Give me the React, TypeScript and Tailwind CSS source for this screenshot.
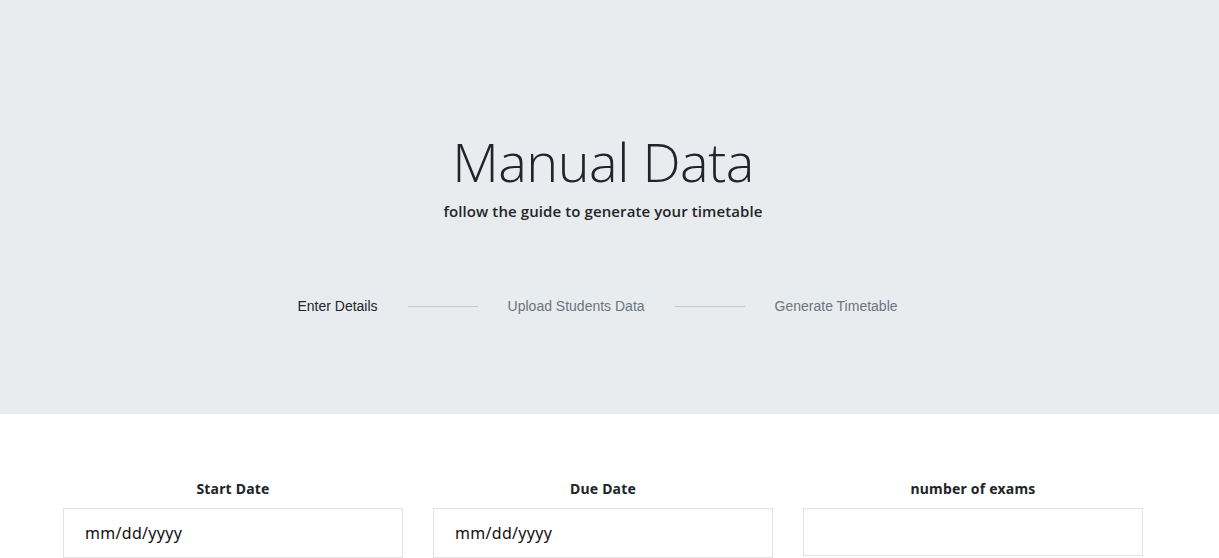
import React from "react";

export default function App() {
  const fields = [
    { label: "Start Date", ph: "mm/dd/yyyy", h: "h-[50px]" },
    { label: "Due Date", ph: "mm/dd/yyyy", h: "h-[50px]" },
    { label: "number of exams", ph: "", h: "h-[48px]" },
  ];
  return (
    <div className="w-[1219px] h-[558px] overflow-hidden bg-white">
      <div className="h-[414px] bg-[#e9ecef]">
        <div className="w-[1206px] flex flex-col items-center pt-[126px]">
          <h1
            className="text-[54px] leading-[70px] font-light text-[#212529] tracking-[-0.5px]"
            style={{ fontFamily: '"Open Sans", sans-serif', fontWeight: 300 }}
          >
            Manual Data
          </h1>
          <p
            className="text-[15px] leading-[22px] font-semibold text-[#212529] mt-[4px] tracking-[0.1px]"
            style={{ fontFamily: '"Open Sans", sans-serif' }}
          >
            follow the guide to generate your timetable
          </p>
          <div
            className="flex items-center mt-[74px] text-[14px] leading-[20px] ml-[-11px]"
            style={{ fontFamily: '"Liberation Sans", Arial, sans-serif' }}
          >
            <span className="text-[#212529]">Enter Details</span>
            <span className="w-[70px] h-px bg-[#c8c8c8] mx-[30px]" />
            <span className="text-[#6c757d]">Upload Students Data</span>
            <span className="w-[70px] h-px bg-[#c8c8c8] mx-[30px]" />
            <span className="text-[#6c757d]">Generate Timetable</span>
          </div>
        </div>
      </div>
      <div
        className="flex gap-[30px] pl-[63px] pt-[66px]"
        style={{ fontFamily: '"Noto Sans", "Open Sans", sans-serif' }}
      >
        {fields.map((f) => (
          <div key={f.label} className="w-[340px] flex flex-col items-center">
            <label className="text-[14px] leading-[18px] font-bold text-[#212529] tracking-[0.2px]">
              {f.label}
            </label>
            <div
              className={`w-[340px] ${f.h} mt-[10px] border border-[#e3e3e3] bg-white flex items-center pl-[21px] text-[16px] text-[#111] tracking-[0.3px]`}
            >
              {f.ph}
            </div>
          </div>
        ))}
      </div>
    </div>
  );
}
